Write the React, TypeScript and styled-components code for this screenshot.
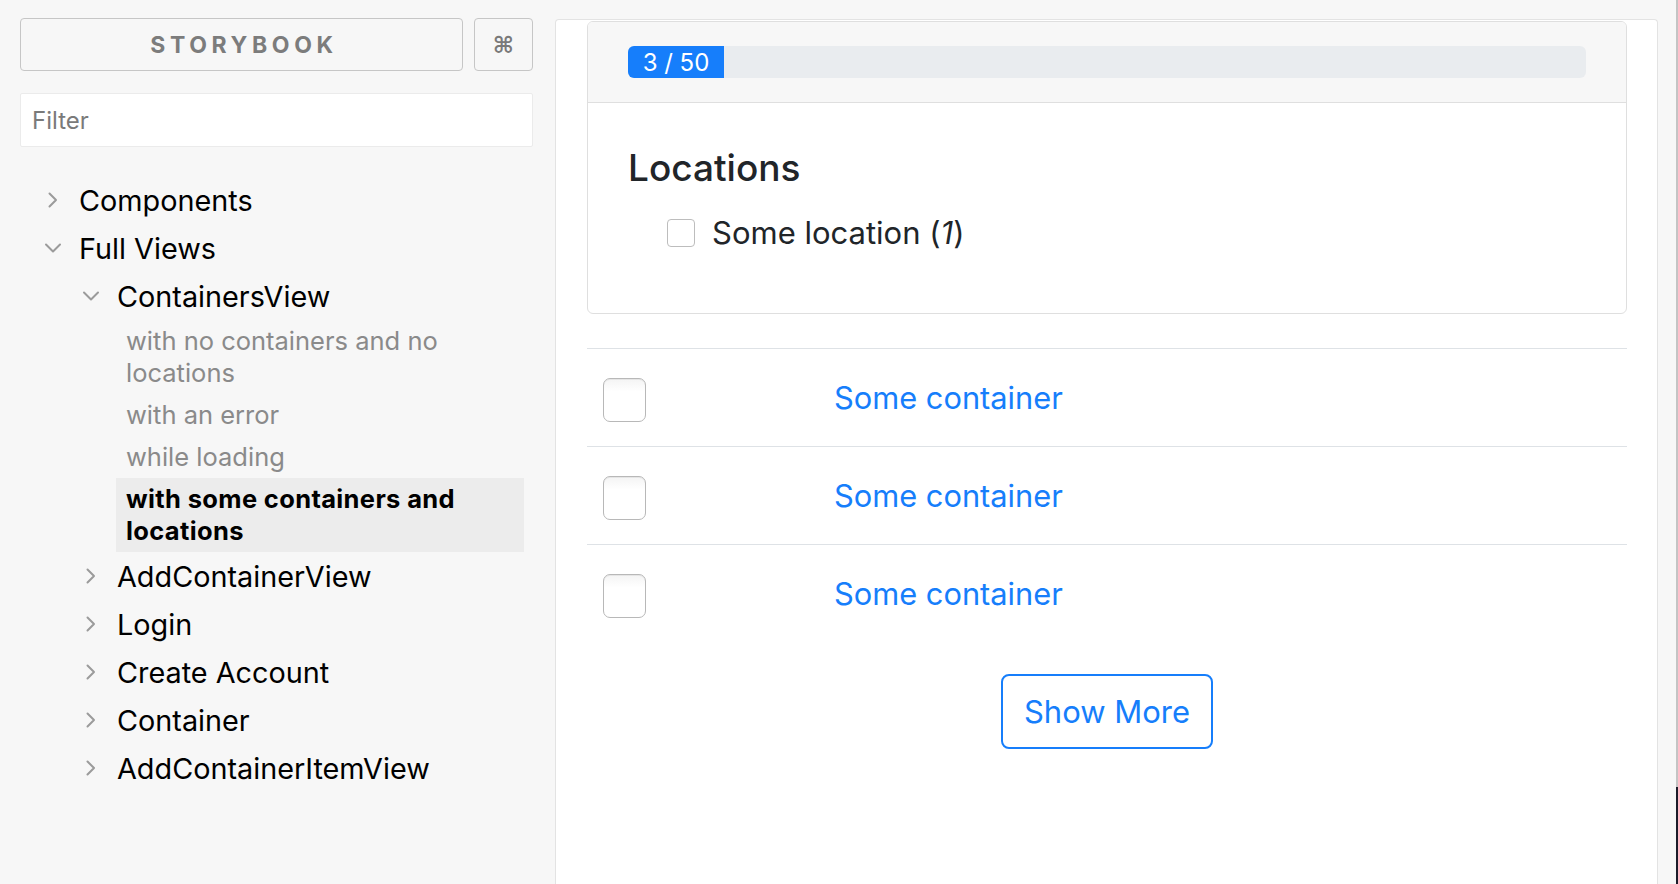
import React from "react";
import styled, { createGlobalStyle } from "styled-components";

const GlobalStyle = createGlobalStyle`
  html, body {
    margin: 0;
    padding: 0;
    height: 100%;
  }
  body {
    background: #f7f7f7;
    font-family: Inter, "Noto Sans", sans-serif;
    overflow: hidden;
  }
  #root {
    height: 100%;
  }
`;

const BLUE = "#167efb";

type TreeNode = { label: string; depth: number; open?: boolean };

const topNodes: TreeNode[] = [
  { label: "Components", depth: 0 },
  { label: "Full Views", depth: 0, open: true },
  { label: "ContainersView", depth: 1, open: true },
];

const stories = [
  { label: "with no containers and no locations" },
  { label: "with an error" },
  { label: "while loading" },
  { label: "with some containers and locations", selected: true },
];

const bottomNodes: TreeNode[] = [
  { label: "AddContainerView", depth: 1 },
  { label: "Login", depth: 1 },
  { label: "Create Account", depth: 1 },
  { label: "Container", depth: 1 },
  { label: "AddContainerItemView", depth: 1 },
];

function Chevron({ open }: { open?: boolean }) {
  return (
    <ChevronBox>
      <svg width="20" height="20" viewBox="0 0 20 20" fill="none">
        {open ? (
          <path d="M3 6.5 L10 13.5 L17 6.5" stroke="#9b9b9b" strokeWidth="2" strokeLinecap="round" strokeLinejoin="round" />
        ) : (
          <path d="M6.5 3.5 L13 10 L6.5 16.5" stroke="#9b9b9b" strokeWidth="2" strokeLinecap="round" strokeLinejoin="round" />
        )}
      </svg>
    </ChevronBox>
  );
}

function NodeRow({ node }: { node: TreeNode }) {
  return (
    <Node $depth={node.depth}>
      <Chevron open={node.open} />
      <NodeLabel>{node.label}</NodeLabel>
    </Node>
  );
}

export default function App() {
  return (
    <>
      <GlobalStyle />
      <Page>
        <Sidebar>
          <HeaderRow>
            <BrandButton>STORYBOOK</BrandButton>
            <ShortcutButton>⌘</ShortcutButton>
          </HeaderRow>
          <FilterInput placeholder="Filter" />
          <Tree>
            {topNodes.map((n) => (
              <NodeRow key={n.label} node={n} />
            ))}
            <StoryList>
              {stories.map((s) => (
                <Story key={s.label} $selected={s.selected}>
                  {s.label}
                </Story>
              ))}
            </StoryList>
            {bottomNodes.map((n) => (
              <NodeRow key={n.label} node={n} />
            ))}
          </Tree>
        </Sidebar>

        <Preview>
          <Card>
            <CardHeader>
              <Progress>
                <ProgressFill $width={96}>3 / 50</ProgressFill>
              </Progress>
            </CardHeader>
            <CardBody>
              <Heading>Locations</Heading>
              <LocationRow>
                <LocationCheck />
                <LocationLabel>
                  Some location (<i>1</i>)
                </LocationLabel>
              </LocationRow>
            </CardBody>
          </Card>

          <ContainerList>
            {[0, 1, 2].map((i) => (
              <ContainerRow key={i}>
                <CheckCell>
                  <RowCheck />
                </CheckCell>
                <ContainerLink>Some container</ContainerLink>
              </ContainerRow>
            ))}
          </ContainerList>

          <ShowMore>Show More</ShowMore>
        </Preview>

        <Gutter />
        <WindowEdge />
      </Page>
    </>
  );
}

const Page = styled.div`
  display: flex;
  width: 1678px;
  height: 884px;
  overflow: hidden;
  background: #f7f7f7;
`;

const Sidebar = styled.div`
  width: 545px;
  flex-shrink: 0;
  box-sizing: border-box;
  padding: 18px 12px 0 20px;
`;

const HeaderRow = styled.div`
  display: flex;
  gap: 11px;
  height: 53px;
`;

const BrandButton = styled.div`
  flex: 1;
  display: flex;
  align-items: center;
  justify-content: center;
  box-sizing: border-box;
  border: 1.5px solid #c6c6c6;
  border-radius: 4px;
  font-size: 23px;
  font-weight: 700;
  letter-spacing: 4.6px;
  padding-left: 5px;
  color: #7c7c7c;
`;

const ShortcutButton = styled.div`
  width: 59px;
  display: flex;
  align-items: center;
  justify-content: center;
  box-sizing: border-box;
  border: 1.5px solid #c6c6c6;
  border-radius: 4px;
  font-family: "DejaVu Sans", sans-serif;
  font-size: 23px;
  font-weight: 700;
  color: #7a7a7a;
`;

const FilterInput = styled.input`
  display: block;
  width: 100%;
  height: 54px;
  margin-top: 22px;
  box-sizing: border-box;
  border: 1px solid #ebebeb;
  border-radius: 2px;
  background: #fff;
  padding: 0 11px;
  font-family: Inter, "Noto Sans", sans-serif;
  font-size: 24px;
  color: #333;
  outline: none;

  &::placeholder {
    color: #7a7a7a;
  }
`;

const Tree = styled.div`
  margin-top: 29px;
`;

const Node = styled.div<{ $depth: number }>`
  display: flex;
  align-items: center;
  height: 48px;
  padding-left: ${(p) => 23 + p.$depth * 38}px;
`;

const ChevronBox = styled.span`
  display: flex;
  width: 20px;
  height: 20px;
  margin-right: 16px;
  flex-shrink: 0;
`;

const NodeLabel = styled.span`
  font-size: 28.8px;
  color: #000;
  white-space: nowrap;
`;

const StoryList = styled.div`
  margin: 0 9px 0 96px;
`;

const Story = styled.div<{ $selected?: boolean }>`
  padding: 5px 10px;
  font-size: 25.5px;
  line-height: 32px;
  color: ${(p) => (p.$selected ? "#000" : "#8a8a8a")};
  font-weight: ${(p) => (p.$selected ? 700 : 400)};
  letter-spacing: ${(p) => (p.$selected ? "0.35px" : "0")};
  background: ${(p) => (p.$selected ? "#ececec" : "transparent")};
`;

const Preview = styled.div`
  flex: 1;
  margin: 19px 0 0 10px;
  box-sizing: border-box;
  background: #fff;
  border: 1px solid #e3e3e3;
  border-bottom: none;
  border-radius: 4px 4px 0 0;
  padding: 1px 30px 0 31px;
`;

const Card = styled.div`
  border: 1px solid #dfdfdf;
  border-radius: 6px;
  overflow: hidden;
  background: #fff;
`;

const CardHeader = styled.div`
  background: #f7f7f7;
  border-bottom: 1px solid #dfdfdf;
  padding: 24px 40px;
`;

const Progress = styled.div`
  display: flex;
  height: 32px;
  border-radius: 6px;
  overflow: hidden;
  background: #e9ecef;
`;

const ProgressFill = styled.div<{ $width: number }>`
  width: ${(p) => p.$width}px;
  display: flex;
  align-items: center;
  justify-content: center;
  background: ${BLUE};
  color: #fff;
  font-size: 24px;
`;

const CardBody = styled.div`
  padding: 42px 40px 37px;
`;

const Heading = styled.h3`
  margin: 0 0 19px;
  font-size: 37px;
  font-weight: 500;
  line-height: 46px;
  color: #212529;
`;

const LocationRow = styled.div`
  display: flex;
  align-items: center;
  height: 45px;
  padding-left: 39px;
  margin-bottom: 21px;
`;

const LocationCheck = styled.span`
  width: 28px;
  height: 28px;
  box-sizing: border-box;
  border: 1px solid #bdbdbd;
  border-radius: 4px;
  margin-right: 17px;
  background: #fff;
`;

const LocationLabel = styled.span`
  font-size: 31px;
  color: #212529;
`;

const ContainerList = styled.div`
  margin-top: 34px;
`;

const ContainerRow = styled.div`
  display: grid;
  grid-template-columns: 247px 1fr;
  align-items: center;
  height: 98px;
  box-sizing: border-box;
  border-top: 1px solid #dee2e6;
`;

const CheckCell = styled.div`
  padding-left: 16px;
  display: flex;
  align-items: center;
`;

const RowCheck = styled.span`
  width: 43px;
  height: 44px;
  margin-top: 5px;
  box-sizing: border-box;
  border: 1.5px solid #b8b8b8;
  border-radius: 7px;
  background: linear-gradient(#f4f4f4, #fff 30%);
  box-shadow: inset 0 1px 0 rgba(0, 0, 0, 0.06);
`;

const ContainerLink = styled.span`
  font-size: 30.8px;
  line-height: 48px;
  color: ${BLUE};
`;

const ShowMore = styled.button`
  display: block;
  margin: 32px auto 0;
  width: 212px;
  height: 75px;
  box-sizing: border-box;
  border: 2px solid ${BLUE};
  border-radius: 8px;
  background: #fff;
  font-family: Inter, "Noto Sans", sans-serif;
  font-size: 31px;
  color: ${BLUE};
  cursor: pointer;
`;

const Gutter = styled.div`
  width: 18px;
  flex-shrink: 0;
`;

const WindowEdge = styled.div`
  width: 2px;
  flex-shrink: 0;
  background: linear-gradient(#c4c4c4 0, #c4c4c4 787px, #1c1c2a 787px);
`;
